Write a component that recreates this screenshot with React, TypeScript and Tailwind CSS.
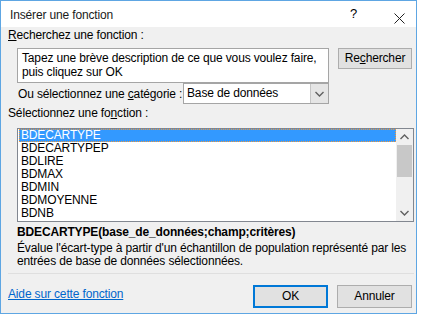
import React from 'react';

const fonctions = ['BDECARTYPE', 'BDECARTYPEP', 'BDLIRE', 'BDMAX', 'BDMIN', 'BDMOYENNE', 'BDNB'];

function Chevron({ up }: { up?: boolean }) {
  return (
    <svg width="9" height="6" viewBox="0 0 9 6" className="block">
      <polyline
        points={up ? '0.5,5 4.5,1 8.5,5' : '0.5,1 4.5,5 8.5,1'}
        fill="none"
        stroke="#606060"
        strokeWidth="1.4"
      />
    </svg>
  );
}

export default function App() {
  return (
    <div className="w-[422px] h-[317px] bg-white text-black text-[12px] leading-[15px] tracking-[-0.15px] whitespace-nowrap" style={{ fontFamily: '"Liberation Sans", Arial, sans-serif' }}>
      <div className="w-[417px] h-[314px] border border-[#5ea6e3] bg-[#f0f0f0] flex flex-col overflow-hidden">
        {/* Title bar */}
        <div className="h-[26px] shrink-0 bg-white flex items-center pl-[9px] pt-[2px] relative">
          <span className="text-[12px] text-[#1a1a1a]">Insérer une fonction</span>
          <span className="absolute left-[349px] top-[5px] text-[13px]">?</span>
          <svg className="absolute left-[393px] top-[12px]" width="11" height="11" viewBox="0 0 11 11">
            <path d="M0.5 0.5 L10.5 10.5 M10.5 0.5 L0.5 10.5" stroke="#222" strokeWidth="1" />
          </svg>
        </div>

        {/* Body */}
        <div className="flex flex-col">
          <div className="ml-[7px] mt-[1px]">
            <u>R</u>echerchez une fonction :
          </div>

          <div className="flex ml-[16px] mt-[5px]">
            <div className="w-[312px] h-[35px] bg-white border border-[#a5a5a5] pl-[4px] pt-[2px] leading-[14px]">
              Tapez une brève description de ce que vous voulez faire,
              <br />
              puis cliquez sur OK
            </div>
            <button className="ml-[9px] w-[74px] h-[21px] bg-[#e1e1e1] border border-[#adadad] flex items-center justify-center">
              Re<u>c</u>hercher
            </button>
          </div>

          <div className="flex items-center ml-[17px]">
            <span className="w-[165px] pt-[1px]">
              Ou sélectionnez une <u>c</u>atégorie :
            </span>
            <div className="w-[146px] h-[21px] bg-white border border-[#a5a5a5] flex items-center">
              <span className="flex-1 pl-[3px]">Base de données</span>
              <div className="w-[18px] h-full bg-[#e5e5e5] border-l border-[#c5c5c5] flex items-center justify-center">
                <Chevron />
              </div>
            </div>
          </div>

          <div className="ml-[7px] mt-[2px]">
            Sélectionnez une fo<u>n</u>ction :
          </div>

          <div className="ml-[16px] mt-[7px] w-[397px] h-[94px] shrink-0 bg-white border border-[#828790] flex">
            <div className="flex-1 pl-[1px] overflow-hidden">
              {fonctions.map((f, i) => (
                <div
                  key={f}
                  className={
                    i === 0
                      ? 'h-[13px] leading-[11px] pl-[1px] bg-[#3399ff] text-white border border-dotted border-[#f29a3b]'
                      : 'h-[13px] leading-[13px] pl-[2px]'
                  }
                >
                  {f}
                </div>
              ))}
            </div>
            <div className="w-[17px] bg-[#f0f0f0] flex flex-col items-center">
              <div className="h-[16px] flex items-center justify-center">
                <Chevron up />
              </div>
              <div className="w-[15px] h-[32px] bg-[#c8c8c8]" />
              <div className="flex-1" />
              <div className="h-[16px] flex items-center justify-center">
                <Chevron />
              </div>
            </div>
          </div>

          <div className="ml-[16px] mt-[3px] font-bold">BDECARTYPE(base_de_données;champ;critères)</div>
          <div className="ml-[16px] mt-[2px] leading-[13px]">
            Évalue l'écart-type à partir d'un échantillon de population représenté par les
            <br />
            entrées de base de données sélectionnées.
          </div>

          <div className="ml-[7px] mt-[5px] w-[406px] h-px shrink-0 bg-[#dfdfdf]" />

          <div className="flex items-center mt-[11px]">
            <a className="ml-[7px] mb-[4px] text-[#0066cc] underline flex-1 cursor-pointer">Aide sur cette fonction</a>
            <button className="w-[75px] h-[23px] bg-[#e1e1e1] border-2 border-[#0078d7] flex items-center justify-center">
              OK
            </button>
            <button className="ml-[9px] mr-[4px] w-[75px] h-[23px] bg-[#e1e1e1] border border-[#adadad] flex items-center justify-center">
              Annuler
            </button>
          </div>
        </div>
      </div>
    </div>
  );
}
